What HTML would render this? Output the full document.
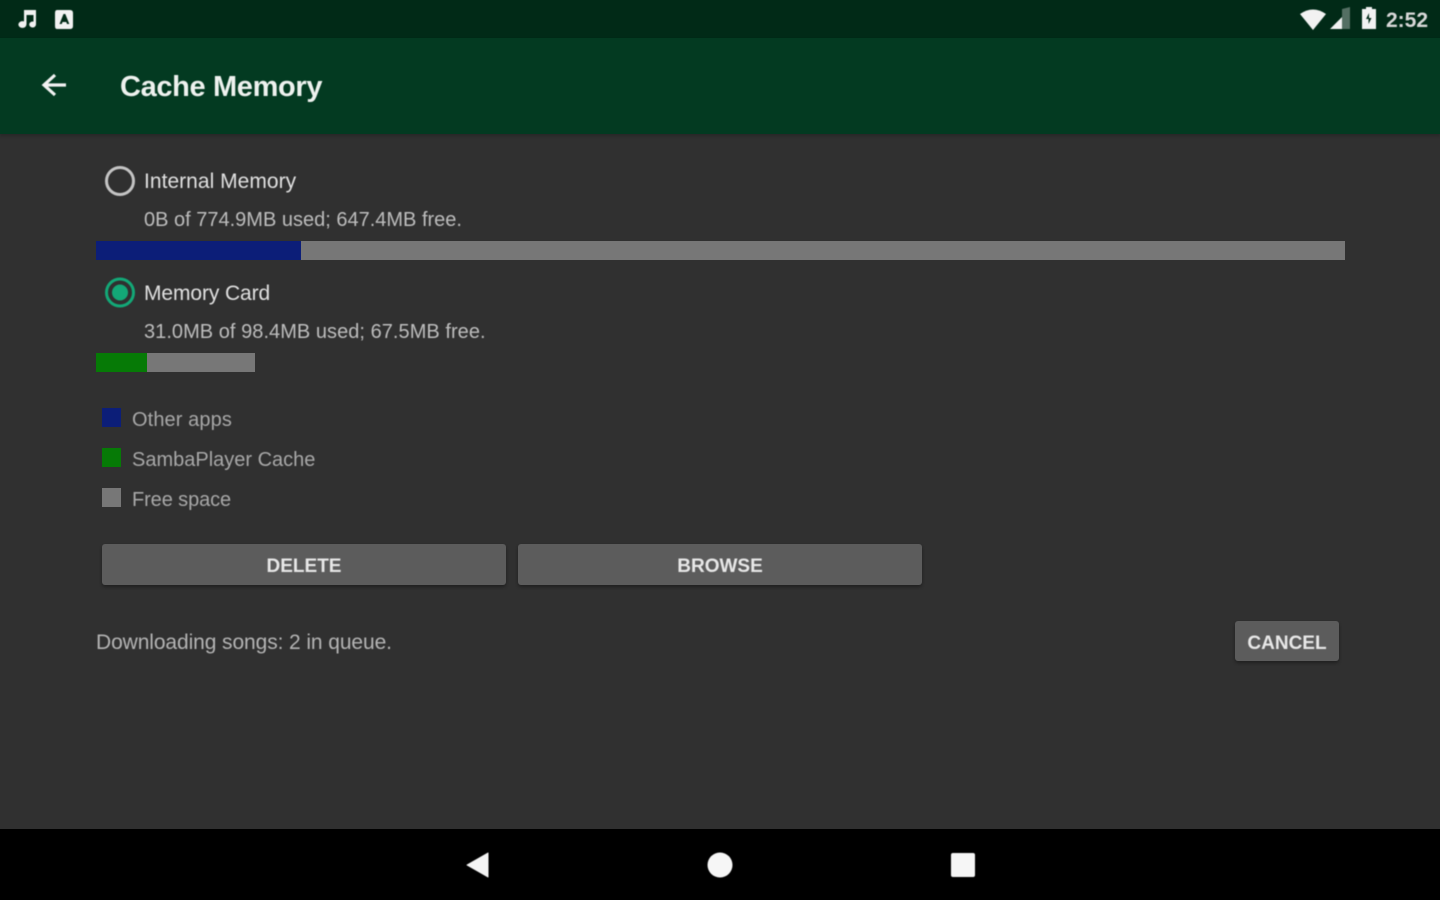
<!DOCTYPE html>
<html><head><meta charset="utf-8"><style>
html,body{margin:0;padding:0;width:1440px;height:900px;overflow:hidden;background:#303030}
body{position:relative;font-family:"Liberation Sans",sans-serif}
.a{position:absolute}
.t{position:absolute;white-space:nowrap;line-height:1;filter:blur(.5px)}
.btn{position:absolute;background:#5c5c5c;border-radius:3px;box-shadow:0 2px 3px rgba(0,0,0,.35);color:#e8e8e8;font-weight:bold;font-size:19px;text-align:center}
.btn span{filter:blur(.5px);display:inline-block}
svg{position:absolute;overflow:visible}
.soft{filter:blur(.6px)}
</style></head><body>
<div class="a" style="left:0;top:0;width:1440px;height:38px;background:#012a17"></div>
<div class="a" style="left:0;top:38px;width:1440px;height:96px;background:#033a21;box-shadow:0 2px 3px rgba(0,0,0,.2)"></div>

<svg class="soft" style="left:0;top:0" width="1440" height="38">
<g fill="#f2f2f2">
<path d="M24 10h12v14.500a3.400 3 0 1 1-2.500-2.900V15h-7v9.500h-.1a4 3.400 0 1 1-2.400-3.100z"/>
<path fill-rule="evenodd" d="M57 10h13q3 0 3 3v13q0 3-3 3H57q-2 0-2-3V13q0-3 2-3zm6.500 4l-4 10h2.300l.7-2h3.800l.7 2h2.300l-4-10z"/>
<path d="M1300 14q13-9 26 0l-13 16z"/>
<path d="M1330 29l12-12v12z"/>
<path d="M1342 29V9l8-2v22z" opacity=".35"/>
<path fill-rule="evenodd" d="M1366 7h6v2h4v20h-14V9h4zm3 6l-3 6h2.500v5l3-6H1369z"/>
</g>
<text x="1386" y="27" font-family="Liberation Sans" font-size="21" font-weight="bold" fill="#d8d8d8" textLength="42">2:52</text>
</svg>

<svg class="soft" style="left:0;top:38px" width="120" height="96"><path d="M66 47H45M55 37L44 47l11 10" fill="none" stroke="#f2f2f2" stroke-width="3.200"/></svg>
<div class="t" style="left:120px;top:73px;font-size:29px;font-weight:bold;color:#eef2ef;letter-spacing:-.35px">Cache Memory</div>

<svg class="soft" style="left:0;top:0" width="400" height="320">
<circle cx="120" cy="181" r="13.500" fill="none" stroke="#c4c4c4" stroke-width="3"/>
<circle cx="120" cy="292.500" r="13.500" fill="none" stroke="#13a877" stroke-width="3"/>
<circle cx="120" cy="292.500" r="8" fill="#13a877"/>
</svg>

<div class="t" style="left:144px;top:171px;font-size:21px;color:#e0e0e0;letter-spacing:.03px">Internal Memory</div>
<div class="t" style="left:144px;top:210px;font-size:20px;color:#bdbdbd;letter-spacing:0">0B of 774.9MB used; 647.4MB free.</div>
<div class="a" style="left:96px;top:241px;width:1249px;height:19px;background:#777"></div>
<div class="a" style="left:96px;top:241px;width:205px;height:19px;background:#0c1e78"></div>

<div class="t" style="left:144px;top:283px;font-size:21px;color:#e0e0e0;letter-spacing:-.1px">Memory Card</div>
<div class="t" style="left:144px;top:322px;font-size:20px;color:#bdbdbd;letter-spacing:.04px">31.0MB of 98.4MB used; 67.5MB free.</div>
<div class="a" style="left:96px;top:353px;width:159px;height:19px;background:#777"></div>
<div class="a" style="left:96px;top:353px;width:51px;height:19px;background:#067a06"></div>

<div class="a" style="left:102px;top:408px;width:19px;height:19px;background:#0c1e78"></div>
<div class="a" style="left:102px;top:448px;width:19px;height:19px;background:#067a06"></div>
<div class="a" style="left:102px;top:488px;width:19px;height:19px;background:#777"></div>
<div class="t" style="left:132px;top:410px;font-size:20px;color:#a8a8a8;letter-spacing:.1px">Other apps</div>
<div class="t" style="left:132px;top:450px;font-size:20px;color:#a8a8a8;letter-spacing:0">SambaPlayer Cache</div>
<div class="t" style="left:132px;top:490px;font-size:20px;color:#a8a8a8;letter-spacing:-.1px">Free space</div>

<div class="btn" style="left:102px;top:544px;width:404px;height:41px;line-height:46px"><span>DELETE</span></div>
<div class="btn" style="left:518px;top:544px;width:404px;height:41px;line-height:46px"><span>BROWSE</span></div>
<div class="t" style="left:96px;top:632px;font-size:21px;color:#b4b4b4;letter-spacing:-.1px">Downloading songs: 2 in queue.</div>
<div class="btn" style="left:1235px;top:621px;width:104px;height:40px;line-height:45px;font-size:19px"><span>CANCEL</span></div>

<div class="a" style="left:0;top:829px;width:1440px;height:71px;background:#000"></div>
<svg class="soft" style="left:0;top:829px" width="1440" height="71">
<path d="M488 24v24l-21-12z" fill="#f4f4f4" stroke="#f4f4f4" stroke-width="1" stroke-linejoin="round"/>
<circle cx="720" cy="36" r="12.500" fill="#f6f6f6"/>
<rect x="951" y="24" width="24" height="24" rx="2" fill="#f6f6f6"/>
</svg>
</body></html>
